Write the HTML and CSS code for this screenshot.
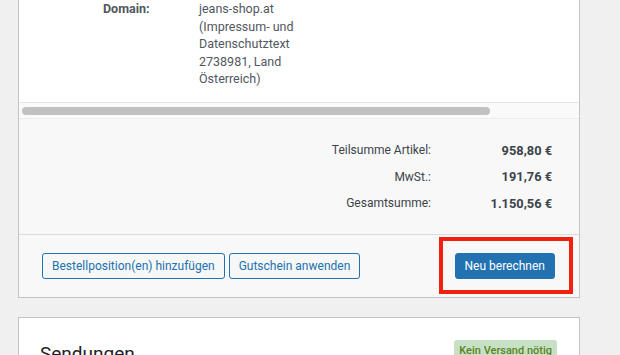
FILE: index.html
```html
<!DOCTYPE html>
<html lang="de">
<head>
 <meta charset="UTF-8">
 <meta name="viewport" content="width=device-width, initial-scale=1.0">
 <title>Bestellung bearbeiten</title>
 <link rel="stylesheet" href="styles.css">
</head>
<body>
 <div class="wrap">
   <div class="postbox order-items">
     <div class="items">
       <div class="meta-row">
         <div class="meta-label">Domain:</div>
         <div class="meta-value">jeans-shop.at<br>(Impressum- und<br>Datenschutztext<br>2738981, Land<br>Österreich)</div>
       </div>
     </div>

     <div class="scrollbar">
       <div class="thumb" style="width: 468px"></div>
     </div>

     <div class="totals">
       <table class="totals-table">
         <tr>
           <td class="label">Teilsumme Artikel:</td>
           <td class="total">958,80 €</td>
         </tr>
         <tr>
           <td class="label">MwSt.:</td>
           <td class="total">191,76 €</td>
         </tr>
         <tr>
           <td class="label">Gesamtsumme:</td>
           <td class="total">1.150,56 €</td>
         </tr>
       </table>
     </div>

     <div class="actions">
       <div class="actions-left">
         <button class="btn">Bestellposition(en) hinzufügen</button>
         <button class="btn">Gutschein anwenden</button>
       </div>
       <div class="highlight">
         <button class="btn btn-primary">Neu berechnen</button>
       </div>
     </div>
   </div>

   <div class="postbox shipments">
     <div class="shipments-head">
       <h2>Sendungen</h2>
       <span class="badge">Kein Versand nötig</span>
     </div>
   </div>
 </div>
</body>
</html>
```

FILE: styles.css
```css
body { margin: 0; background: #f0f0f1; font-family: Roboto, "Noto Sans", sans-serif; color: #3c434a; }
.wrap { padding-left: 18px; width: 562px; }
.postbox { background: #fff; border: 1px solid #c3c4c7; border-top: none; }

/* Artikel */
.items { padding: 0 0 14px 0; }
.meta-row { display: grid; grid-template-columns: 96px 110px; padding-left: 84px; font-size: 12.5px; line-height: 17.6px; }
.meta-label { font-weight: 700; color: #50575e; }
.meta-value { color: #50575e; }

.scrollbar { border-top: 1px solid #e6e6e6; background: #fafafa; padding: 4px 3px 3px; }
.thumb { height: 8px; border-radius: 4px; background: #c1c1c1; }

/* Summen */
.totals { background: #f8f8f8; border-top: 1px solid #ececec; padding: 18px 27px 18px 0; display: flex; justify-content: flex-end; border-bottom: 1px solid #dcdcde; }
.totals-table { border-collapse: collapse; font-size: 12px; }
.totals-table td { padding: 0; height: 26.5px; text-align: right; }
.totals-table .label { color: #3c434a; }
.totals-table .total { width: 100px; padding-left: 21px; font-size: 12.8px; font-weight: 700; color: #3c434a; }

/* Buttons */
.actions { background: #f8f8f8; display: flex; justify-content: space-between; align-items: center; padding: 18px 24px 18px 23px; }
.actions-left { display: flex; gap: 4px; }
.btn { font-family: inherit; font-size: 12px; height: 26px; padding: 0 9px; border: 1px solid #2271b1; border-radius: 3px; background: #f6f7f7; color: #2271b1; }
.btn-primary { background: #2271b1; color: #fff; padding: 0 9px; }
.highlight { position: relative; display: flex; }
.highlight::after { content: ""; position: absolute; top: -16px; right: -18px; bottom: -15px; left: -16px; border: 4px solid #f2200f; }

/* Sendungen */
.shipments { margin-top: 19px; border-top: 1px solid #c3c4c7; height: 60px; }
.shipments-head { display: flex; justify-content: space-between; align-items: flex-start; padding: 23px 22px 0 21px; }
.shipments-head h2 { margin: 0; font-size: 19px; font-weight: 400; color: #1d2327; line-height: 26px; }
.badge { margin-top: -1px; background: #c6e1c6; color: #5b841b; font-size: 11px; font-weight: 500; padding: 3px 5px; border-radius: 3px; line-height: 16px; }
```
